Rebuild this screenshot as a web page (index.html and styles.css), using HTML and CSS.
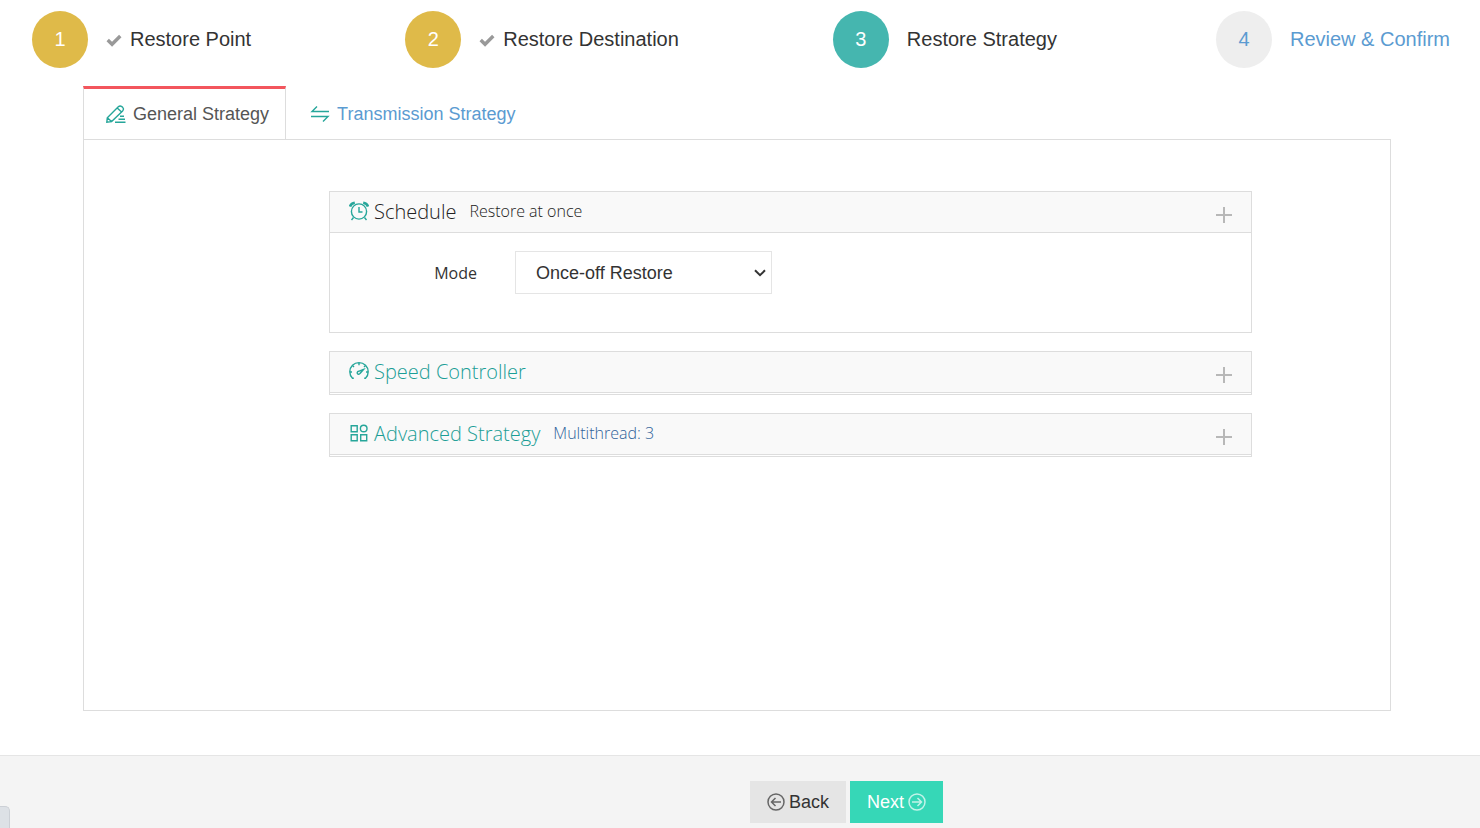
FILE: index.html
```html
<!DOCTYPE html>
<html lang="en">
<head>
<meta charset="utf-8">
<title>Restore Strategy</title>
<link rel="stylesheet" href="styles.css">
</head>
<body>
<ol class="steps">
  <li class="step done"><span class="num">1</span>
    <svg class="check" viewBox="0 0 14 12"><path d="M1.5 6 5.3 9.7 12.5 2.5" /></svg><span>Restore Point</span></li>
  <li class="step done"><span class="num">2</span>
    <svg class="check" viewBox="0 0 14 12"><path d="M1.5 6 5.3 9.7 12.5 2.5" /></svg><span>Restore Destination</span></li>
  <li class="step active"><span class="num">3</span><span>Restore Strategy</span></li>
  <li class="step todo"><span class="num">4</span><a href="#review">Review &amp; Confirm</a></li>
</ol>

<main class="wizard">
  <nav class="tabs">
    <a class="tab current" href="#general">
      <svg class="icon" viewBox="0 0 20 20"><path d="M.8 17.300 1.300 12.700 12.300 1.800Q14 .2 15.800 1.600L16.800 2.600Q18.200 4.200 16.600 5.900L5.600 16.600ZM11.200 2.900l4.400 4.200M1.300 12.700l4.300 3.900M14 11.300h4M12.500 14.300h6.500M9 17.300h10.500"/></svg>
      <span>General Strategy</span></a>
    <a class="tab" href="#transmission">
      <svg class="icon" viewBox="0 0 20 20"><path d="M19 7.500H2L7 2.500M1 12.500H18L13 17.500"/></svg>
      <span>Transmission Strategy</span></a>
  </nav>
  <div class="pane">
    <section class="card">
      <header class="head dark">
        <svg class="icon" viewBox="0 0 20 20"><circle cx="10" cy="10.500" r="7.600"/><path d="M10 6v5h3.500M4.500 16.500 2.500 19M15.500 16.500l2 2.500"/><path class="bell" d="M1 5.500Q2 2.300 5.800 1.700M19 5.500Q18 2.300 14.200 1.700"/></svg>
        <a class="title" href="#schedule">Schedule</a><span class="note">Restore at once</span>
        <button class="plus" type="button" aria-label="Toggle schedule"></button>
      </header>
      <div class="body">
        <label class="label" for="mode">Mode</label>
        <span class="pick">
          <select id="mode"><option>Once-off Restore</option></select>
          <svg class="caret" viewBox="0 0 12 8"><path d="M1 1.300 6 6.200 11 1.300"/></svg>
        </span>
      </div>
    </section>
    <section class="card folded">
      <header class="head">
        <svg class="icon" viewBox="0 0 20 20"><path d="M4.800 17.300H3.500A9.200 9.200 0 1 1 16.500 17.300H15.200M10 1.800v2.400M1 11h2M17 11h2M4 5l1 1M16 5l-1 1"/><path d="M14.500 8.500 9.500 10.300A1.500 1.500 0 1 0 11 12.500Z"/></svg>
        <a class="title" href="#speed">Speed Controller</a>
        <button class="plus" type="button" aria-label="Toggle speed controller"></button>
      </header>
    </section>
    <section class="card folded">
      <header class="head">
        <svg class="icon" viewBox="0 0 20 20"><path d="M2.200 2.700h6v6h-6zM2.200 11.700h6v6h-6zM11.700 11.700h6v6h-6z"/><circle cx="14.700" cy="5.500" r="3.300"/></svg>
        <a class="title" href="#advanced">Advanced Strategy</a><span class="note">Multithread: 3</span>
        <button class="plus" type="button" aria-label="Toggle advanced strategy"></button>
      </header>
    </section>
  </div>
</main>

<footer class="actions">
  <button class="btn back" type="button">
    <svg viewBox="0 0 18 18"><circle cx="9" cy="9" r="8"/><path d="M14 9H4.500M8.500 5l-4 4 4 4"/></svg>Back</button>
  <button class="btn next" type="button">Next<svg viewBox="0 0 18 18"><circle cx="9" cy="9" r="8"/><path d="M4 9h9.500M9.500 5l4 4-4 4"/></svg></button>
  <span class="handle"></span>
</footer>
</body>
</html>
```
FILE: styles.css
```css
* { box-sizing: border-box; }
body {
  margin: 0;
  min-height: 100vh;
  display: flex;
  flex-direction: column;
  background: #fff;
  color: #333;
  font-family: "Liberation Sans", Arial, sans-serif;
  font-size: 18px;
}
a { color: #5b9bd1; text-decoration: none; }
svg { fill: none; flex: none; }

.steps {
  display: flex;
  justify-content: space-between;
  margin: 0;
  padding: 11px 30px 18px 32px;
  list-style: none;
  font-size: 20px;
}
.step { display: flex; align-items: center; white-space: nowrap; }
.num {
  display: flex;
  align-items: center;
  justify-content: center;
  width: 56px;
  height: 57px;
  margin-right: 18px;
  border-radius: 50%;
  color: #fff;
}
.active { padding-right: 5px; }
.done .num { background: #dfba49; }
.active .num { background: #45b6af; }
.todo .num { background: #eee; color: #5b9bd1; }
.check { width: 16px; height: 14px; margin-right: 8px; stroke: #999; stroke-width: 3; }

.wizard {
  flex: 1;
  display: flex;
  flex-direction: column;
  margin: 0 89px 44px 83px;
}
.tabs { display: flex; }
.tab {
  display: flex;
  align-items: center;
  gap: 7px;
  height: 53px;
  padding: 3px 20px 0 24px;
  white-space: nowrap;
}
.current {
  height: 54px;
  margin-bottom: -1px;
  padding: 0 16px 0 22px;
  border: 1px solid #ddd;
  border-top: 3px solid #f3565d;
  border-bottom: 0;
  background: #fff;
  color: #555;
}
.icon { width: 20px; height: 20px; stroke: #26a69a; stroke-width: 1.4; }
.bell { stroke-width: 2.6; }

.pane {
  flex: 1;
  display: flex;
  flex-direction: column;
  gap: 18px;
  padding: 51px 138px 51px 245px;
  border: 1px solid #ddd;
}
.card { border: 1px solid #ddd; font-family: "Open Sans", sans-serif; }
.folded { padding-bottom: 1px; }
.head {
  display: flex;
  align-items: center;
  height: 41px;
  padding: 0 19px 2px;
  border-bottom: 1px solid #ddd;
  background: #f9f9f9;
  font-weight: 300;
}
.title { margin-left: 5px; font-size: 20px; color: #1b9e96; }
.note { margin-left: 13px; font-size: 16px; color: #2f6299; }
.dark .title, .dark .note { color: #222; }
.plus {
  width: 16px;
  height: 16px;
  margin: 8px 0 0 auto;
  padding: 0;
  border: 0;
  background:
    linear-gradient(#b8b8b8, #b8b8b8) center / 2px 100% no-repeat,
    linear-gradient(#b8b8b8, #b8b8b8) center / 100% 2px no-repeat;
}
.body {
  display: flex;
  align-items: center;
  gap: 38px;
  padding: 18px 0 38px;
}
.label { width: 147px; text-align: right; font-size: 16px; }
.pick { position: relative; display: flex; width: 257px; }
.pick select {
  appearance: none;
  width: 100%;
  height: 43px;
  padding: 0 20px;
  border: 1px solid #e5e5e5;
  border-radius: 0;
  background: #fff;
  color: #333;
  font: 18px "Liberation Sans", Arial, sans-serif;
}
.caret {
  position: absolute;
  right: 6px;
  top: 18px;
  width: 12px;
  height: 8px;
  stroke: #333;
  stroke-width: 2;
  pointer-events: none;
}

.actions {
  position: relative;
  display: flex;
  gap: 4px;
  padding: 25px 0 5px calc(50% + 10px);
  border-top: 1px solid #e5e5e5;
  background: #f4f4f4;
}
.btn {
  display: flex;
  align-items: center;
  gap: 4px;
  height: 42px;
  padding: 0 17px;
  border: 0;
  font: 18px "Liberation Sans", Arial, sans-serif;
}
.btn svg { width: 18px; height: 18px; stroke-width: 1.5; }
.back { background: #e5e5e5; color: #333; }
.back svg { stroke: #666; }
.next { background: #36d7b7; color: #fff; }
.next svg { stroke: #c3f3e9; }
.handle {
  position: absolute;
  left: 0;
  bottom: 0;
  width: 10px;
  height: 22px;
  border: 1px solid #ccd0d6;
  border-width: 1px 1px 0 0;
  border-radius: 0 5px 0 0;
  background: #dde1e6;
}
```
